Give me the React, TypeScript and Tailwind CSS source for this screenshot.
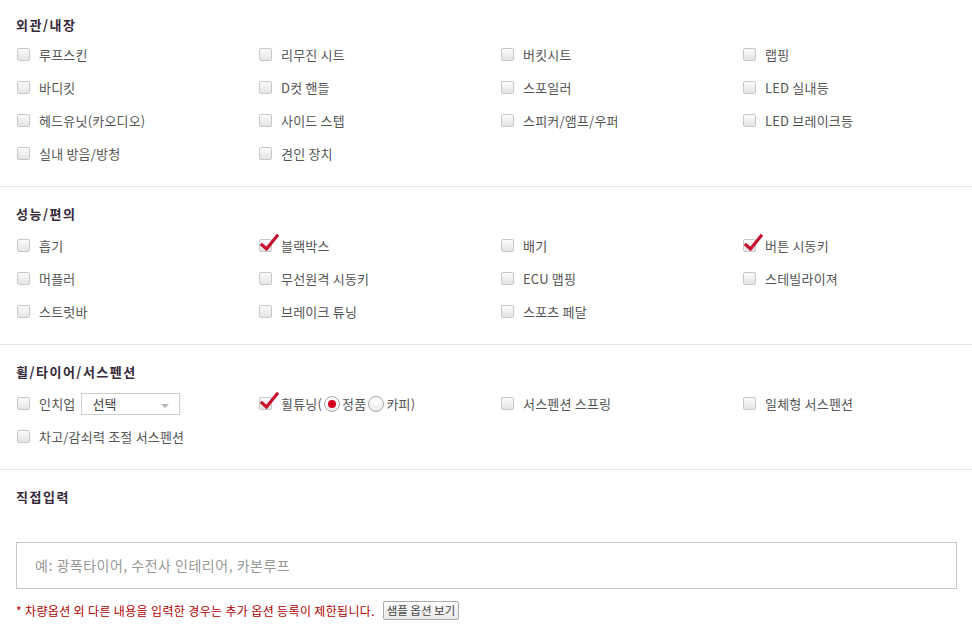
import React from "react";

const FONT = { fontFamily: '"Noto Sans CJK KR", "Noto Sans", sans-serif' };

function Box({ checked }: { checked?: boolean }) {
  return (
    <span className="relative inline-block h-[13px] w-[13px] shrink-0 rounded-[2px] border border-[#c8c8c8] bg-gradient-to-b from-[#fbfbfb] to-[#e4e4e4]">
      {checked && (
        <svg
          className="absolute left-[0px] top-[-6px]"
          width="19"
          height="18"
          viewBox="0 0 19 18"
        >
          <path
            d="M2 11 L6.5 15 L17 2"
            fill="none"
            stroke="#c8102e"
            strokeWidth="3.2"
            strokeLinecap="square"
          />
        </svg>
      )}
    </span>
  );
}

function Item({ label, checked }: { label: string; checked?: boolean }) {
  return (
    <div className="flex h-[33px] items-center">
      <Box checked={checked} />
      <span className="ml-[9px] text-[13px] tracking-[0.2px] text-[#555]">{label}</span>
    </div>
  );
}

function Radio({ checked }: { checked?: boolean }) {
  return (
    <span className="mx-[2px] inline-flex h-[16px] w-[16px] items-center justify-center rounded-full border border-[#a8a8a8] bg-gradient-to-b from-white to-[#ececec]">
      {checked && <span className="h-[8px] w-[8px] rounded-full bg-[#d3001f]" />}
    </span>
  );
}

function Section({
  title,
  first,
  children,
}: {
  title: string;
  first?: boolean;
  children: React.ReactNode;
}) {
  return (
    <section
      className={
        "border-b border-[#e6e6e6] pb-[16px] " + (first ? "pt-[17px]" : "pt-[19px]")
      }
    >
      <h3 className="h-[16px] pl-[16px] text-[13px] font-bold leading-[16px] tracking-[1.5px] text-[#35293a]">
        {title}
      </h3>
      <div
        className={
          "grid grid-cols-[repeat(4,242px)] pl-[17px] " + (first ? "mt-[5px]" : "mt-[7px]")
        }
      >
        {children}
      </div>
    </section>
  );
}

export default function App() {
  return (
    <div className="w-[972px] bg-white" style={FONT}>
      <Section title="외관/내장" first>
        <Item label="루프스킨" />
        <Item label="리무진 시트" />
        <Item label="버킷시트" />
        <Item label="랩핑" />
        <Item label="바디킷" />
        <Item label="D컷 핸들" />
        <Item label="스포일러" />
        <Item label="LED 실내등" />
        <Item label="헤드유닛(카오디오)" />
        <Item label="사이드 스텝" />
        <Item label="스피커/앰프/우퍼" />
        <Item label="LED 브레이크등" />
        <Item label="실내 방음/방청" />
        <Item label="견인 장치" />
      </Section>

      <Section title="성능/편의">
        <Item label="흡기" />
        <Item label="블랙박스" checked />
        <Item label="배기" />
        <Item label="버튼 시동키" checked />
        <Item label="머플러" />
        <Item label="무선원격 시동키" />
        <Item label="ECU 맵핑" />
        <Item label="스테빌라이져" />
        <Item label="스트럿바" />
        <Item label="브레이크 튜닝" />
        <Item label="스포츠 페달" />
      </Section>

      <Section title="휠/타이어/서스펜션">
        <div className="flex h-[33px] items-center">
          <Box />
          <span className="ml-[9px] text-[13px] tracking-[0.2px] text-[#555]">인치업</span>
          <div className="relative ml-[6px] flex h-[22px] w-[99px] items-center border border-[#cccccc] bg-white pl-[10px] text-[13px] text-[#444]">
            선택
            <span className="absolute right-[10px] top-[10px] h-0 w-0 border-l-[4px] border-r-[4px] border-t-[4px] border-l-transparent border-r-transparent border-t-[#b5b5b5]" />
          </div>
        </div>
        <div className="flex h-[33px] items-center">
          <Box checked />
          <span className="ml-[9px] flex items-center text-[13px] tracking-[0.2px] text-[#555]">
            휠튜닝(
            <Radio checked />
            정품
            <Radio />
            카피)
          </span>
        </div>
        <Item label="서스펜션 스프링" />
        <Item label="일체형 서스펜션" />
        <Item label="차고/감쇠력 조절 서스펜션" />
      </Section>

      <section className="pt-[19px] pb-[20px]">
        <h3 className="h-[16px] pl-[16px] text-[13px] font-bold leading-[16px] tracking-[1.5px] text-[#35293a]">
          직접입력
        </h3>
        <div className="mt-[37px] pl-[16px]">
          <div className="flex h-[47px] w-[941px] items-center border border-[#c8c8c8] bg-white pl-[18px] text-[14px] tracking-[0.5px] text-[#999]">
            예: 광폭타이어, 수전사 인테리어, 카본루프
          </div>
        </div>
        <div className="mt-[12px] flex items-center pl-[16px]">
          <span className="text-[12px] tracking-[0.35px] text-[#b00000]">
            * 차량옵션 외 다른 내용을 입력한 경우는 추가 옵션 등록이 제한됩니다.
          </span>
          <button className="ml-[8px] flex h-[19px] w-[76px] items-center justify-center rounded-[2px] border border-[#a9a9a9] bg-gradient-to-b from-[#fdfdfd] to-[#e9e9e9] text-[11.5px] text-[#444]">
            샘플 옵션 보기
          </button>
        </div>
      </section>
    </div>
  );
}
